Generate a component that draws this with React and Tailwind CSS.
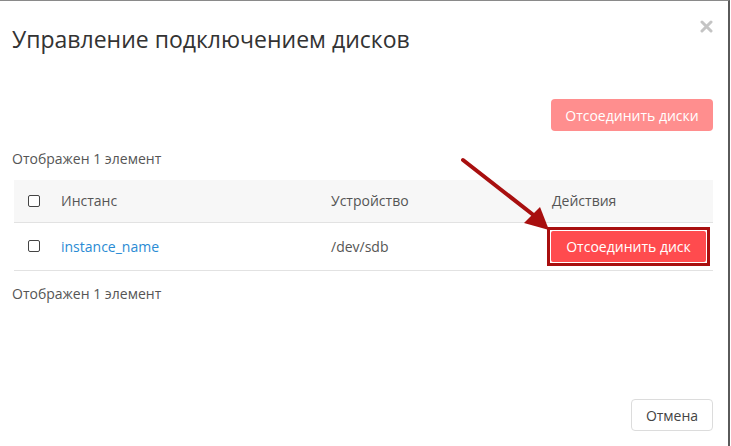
import React from 'react';

function Checkbox() {
  return <span className="block w-[12px] h-[12px] border border-[#444] rounded-[2px] bg-white" />;
}

export default function App() {
  return (
    <div className="relative w-[731px] h-[446px] bg-white overflow-hidden" style={{ fontFamily: '"Open Sans", "Noto Sans", sans-serif' }}>
      <div className="h-full border-t border-[#8a8a8a] border-r-2 border-r-[#5a5a5a] mr-[1px] flex flex-col">
        {/* header */}
        <div className="flex items-start justify-between pl-3 pr-[15px] pt-[23px]">
          <h1 className="text-[23px] leading-[30px] text-[#333]">Управление подключением дисков</h1>
          <button className="-mt-[4px]">
            <svg width="13" height="13" viewBox="0 0 13 13">
              <path d="M2 2 L11 11 M11 2 L2 11" stroke="#c4c4c4" strokeWidth="3" strokeLinecap="round" />
            </svg>
          </button>
        </div>

        <div className="pl-[14px] pr-[15px] flex flex-col">
          <div className="flex justify-end mt-[45px]">
            <button className="h-[32px] w-[162px] rounded-[4px] bg-[#ff8e8e] text-white text-[14px]">Отсоединить диски</button>
          </div>

          <div className="text-[14px] text-[#555] mt-[18px] -ml-[2px] leading-[20px]">Отображен 1 элемент</div>

          <table className="w-full mt-[11px] text-[14px] text-[#555] border-collapse">
            <thead>
              <tr className="bg-[#f7f7f7] h-[42px] border-b border-[#e2e2e2]">
                <th className="w-[47px] pl-[14px] text-left align-middle font-normal"><Checkbox /></th>
                <th className="text-left font-normal w-[270px]">Инстанс</th>
                <th className="text-left font-normal w-[221px]">Устройство</th>
                <th className="text-left font-normal">Действия</th>
              </tr>
            </thead>
            <tbody>
              <tr className="h-[48px] border-b border-[#e2e2e2]">
                <td className="pl-[14px] align-middle"><Checkbox /></td>
                <td className="text-[#2a8bd4]">instance_name</td>
                <td>/dev/sdb</td>
                <td>
                  <div className="-ml-[5px] w-[163px] border-[3px] border-[#a80f0f] p-[1px]">
                    <button className="w-full h-[31px] bg-[#ff4b4e] text-white text-[14px] rounded-[2px]">Отсоединить диск</button>
                  </div>
                </td>
              </tr>
            </tbody>
          </table>

          <div className="text-[14px] text-[#555] mt-[13px] -ml-[2px] leading-[20px]">Отображен 1 элемент</div>
        </div>

        <div className="mt-auto flex justify-end pr-[15px] pb-[15px]">
          <button className="h-[32px] w-[82px] border border-[#dcdcdc] rounded-[4px] text-[14px] text-[#444] bg-white">Отмена</button>
        </div>
      </div>

      {/* annotation arrow */}
      <svg className="absolute left-0 top-0 pointer-events-none" width="731" height="446">
        <line x1="463" y1="160" x2="536" y2="217" stroke="#a80f0f" strokeWidth="4" strokeLinecap="round" />
        <polygon points="549,230 524,223 540,207" fill="#a80f0f" />
      </svg>
    </div>
  );
}
